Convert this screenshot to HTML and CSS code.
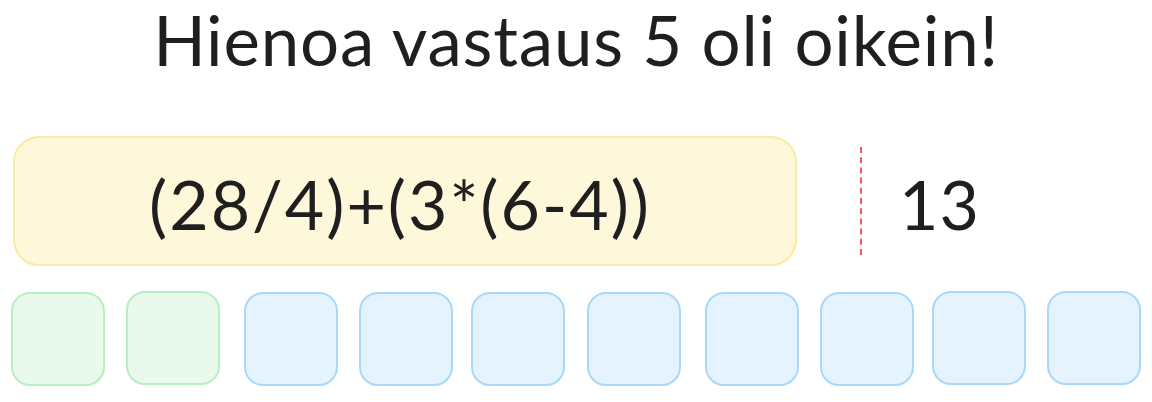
FILE: index.html
```html
<!DOCTYPE html>
<html lang="fi">
<head>
<meta charset="utf-8">
<link rel="stylesheet" href="styles.css">
<title>Vastaus</title>
</head>
<body>
<main class="game">
  <h1 class="title">Hienoa vastaus 5 oli oikein!</h1>
  <section class="task">
    <div class="expr">(28/4)+(3*(6-4))</div>
    <div class="divider"></div>
    <div class="target">13</div>
  </section>
  <section class="tiles">
    <div class="tile done"></div>
    <div class="tile done lift"></div>
    <div class="tile shift"></div>
    <div class="tile shift"></div>
    <div class="tile"></div>
    <div class="tile"></div>
    <div class="tile shift"></div>
    <div class="tile shift"></div>
    <div class="tile lift"></div>
    <div class="tile lift"></div>
  </section>
</main>
</body>
</html>
```

FILE: styles.css
```css
* { box-sizing: border-box; }
html, body { margin: 0; padding: 0; background: #ffffff; }
body {
  width: 1152px;
  height: 402px;
  overflow: hidden;
  font-family: "Lato", "Liberation Sans", sans-serif;
  color: #1f1f1f;
}
.game {
  display: flex;
  flex-direction: column;
}
.title {
  margin: 0;
  padding-top: 2px;
  height: 136px;
  font-size: 69px;
  font-weight: 400;
  line-height: 76px;
  letter-spacing: 0.8px;
  text-align: center;
}
.task {
  display: flex;
  align-items: center;
  padding-left: 13px;
  height: 130px;
}
.expr {
  width: 784px;
  height: 130px;
  background: #fef8db;
  border: 2px solid #fdeaa2;
  border-radius: 26px;
  display: flex;
  align-items: center;
  justify-content: center;
  font-size: 68px;
  letter-spacing: 2px;
  padding-top: 4px;
  padding-right: 10px;
}
.divider {
  margin-left: 63px;
  width: 0;
  height: 108px;
  border-left: 2px dashed #f5575a;
}
.target {
  margin-left: 37px;
  font-size: 68px;
  letter-spacing: 1px;
  padding-top: 4px;
}
.tiles {
  display: flex;
  justify-content: space-between;
  padding: 0 11px;
  margin-top: 26px;
}
.tile {
  width: 94px;
  height: 94px;
  border-radius: 19px;
  border: 2px solid #aad8f8;
  background: #e4f3fd;
}
.tile.done {
  border-color: #b6efc2;
  background: #e9f9ec;
}
.tile.shift { transform: translateX(3px); }
.tile.lift { transform: translateY(-1px); }
```
